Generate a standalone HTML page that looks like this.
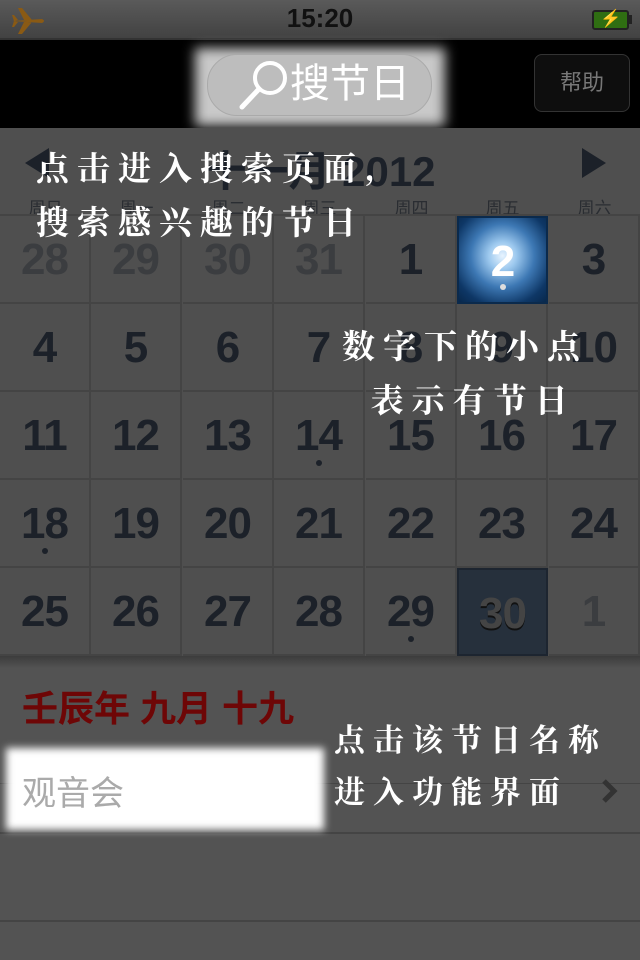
<!DOCTYPE html>
<html><head><meta charset="utf-8"><style>
*{margin:0;padding:0;box-sizing:border-box}
body{width:640px;height:960px;overflow:hidden;background:#535353;font-family:"Liberation Sans","Noto Sans CJK SC",sans-serif;position:relative}
.abs{position:absolute}
#status{left:0;top:0;width:640px;height:40px;background:linear-gradient(#5a5a5a,#424242);border-bottom:2px solid #333}
#nav{left:0;top:40px;width:640px;height:88px;background:#000}
#cal{left:0;top:128px;width:640px;height:530px;background:#4f4f4f}
.cell{position:absolute;width:91px;height:88px;border-right:2px solid #444;border-bottom:2px solid #444;text-align:center;font-weight:bold;font-size:44px;color:#1c2129;line-height:88px;letter-spacing:-1px}
.cell.o{color:#3b3d40}
.dot{position:absolute;left:50%;bottom:12px;width:6px;height:6px;margin-left:-3px;border-radius:3px;background:#1c2129}
.wd{position:absolute;top:194px;width:91px;text-align:center;font-size:17px;color:#2a2d32}
.note{color:#fff;font-family:"Noto Serif CJK SC","WenQuanYi Zen Hei",serif;font-size:33px;letter-spacing:8px;line-height:54px;font-weight:bold}
</style></head><body>
<div id="status" class="abs"></div>
<svg class="abs" style="left:10px;top:6px" width="36" height="30" viewBox="0 0 36 30"><path d="M2 15 L32 13 Q36 15 32 17 L2 15Z M14 14 L8 2 L12 2 L22 14Z M14 16 L8 28 L12 28 L22 16Z M4 15 L2 9 L4 9 L8 14Z M4 15 L2 21 L4 21 L8 16Z" fill="#8a5a14"/></svg>
<div class="abs" style="left:0;width:640px;top:3px;text-align:center;font-weight:bold;font-size:26px;color:#111">15:20</div>
<div class="abs" style="left:592px;top:10px;width:37px;height:20px;border:2px solid #222;border-radius:3px;background:#2f6e12"></div>
<div class="abs" style="left:629px;top:15px;width:3px;height:9px;background:#222"></div>
<div class="abs" style="left:600px;top:9px;color:#111;font-size:17px">⚡</div>
<div id="nav" class="abs"></div>
<div class="abs" style="left:195px;top:48px;width:250px;height:78px;background:#c9c9c9;filter:blur(6px)"></div>
<div class="abs" style="left:207px;top:54px;width:225px;height:62px;border-radius:30px;background:#bdbdbd;border:1px solid #aaa"></div>
<svg class="abs" style="left:236px;top:58px" width="56" height="54" viewBox="0 0 56 54"><circle cx="34" cy="20" r="15" fill="none" stroke="#fff" stroke-width="4"/><line x1="23" y1="31" x2="6" y2="49" stroke="#fff" stroke-width="5" stroke-linecap="round"/></svg>
<div class="abs" style="left:290px;top:58px;font-size:40px;color:#fff;line-height:52px">搜节日</div>
<div class="abs" style="left:534px;top:54px;width:96px;height:58px;border-radius:8px;background:#0e0e0e;border:1px solid #333;color:#777;font-size:22px;text-align:center;line-height:56px">帮助</div>
<div id="cal" class="abs"></div>
<div class="abs" style="left:25px;top:148px;width:0;height:0;border-top:15px solid transparent;border-bottom:15px solid transparent;border-right:24px solid #1c2129"></div>
<div class="abs" style="left:582px;top:148px;width:0;height:0;border-top:15px solid transparent;border-bottom:15px solid transparent;border-left:24px solid #1c2129"></div>
<div class="abs" style="left:0;width:640px;top:138px;text-align:center;font-size:42px;font-weight:bold;color:#1c2129">十一月 2012</div>
<div class="wd" style="left:0">周日</div><div class="wd" style="left:91px">周一</div><div class="wd" style="left:183px">周二</div><div class="wd" style="left:274px">周三</div><div class="wd" style="left:366px">周四</div><div class="wd" style="left:457px">周五</div><div class="wd" style="left:549px">周六</div>
<div class="abs" style="left:0;top:214px;width:640px;height:2px;background:#444"></div>
<div id="grid"></div>
<script>
var d=[[28,29,30,31,1,2,3],[4,5,6,7,8,9,10],[11,12,13,14,15,16,17],[18,19,20,21,22,23,24],[25,26,27,28,29,30,1]];
var dots={"2-3":1,"3-0":1,"4-4":1,"0-5":1};
var h="";
for(var r=0;r<5;r++)for(var c=0;c<7;c++){
var cls="cell"+((r==0&&c<4)||(r==4&&c==6)?" o":"");
var st="left:"+Math.round(c*91.43)+"px;top:"+(216+r*88)+"px;";
var txt=d[r][c];
if(r==0&&c==5){st+="background:radial-gradient(circle at 50% 45%,#e8f4ff 0,#9cc8ee 22%,#3d78b4 50%,#0e3766 80%,#08284c 100%);color:#fff;border:2px solid #0b2a4c;";}
if(r==4&&c==5){st+="background:#26303c;color:#444;text-shadow:0 2px 0 #111;border:2px solid #1d2530;";}
var dot=dots[r+"-"+c]?'<div class="dot"'+(r==0?' style="background:#ddd"':'')+'></div>':'';
h+='<div class="'+cls+'" style="'+st+'">'+txt+dot+'</div>';}
document.getElementById("grid").innerHTML=h;
</script>
<div class="abs" style="left:0;top:656px;width:640px;height:12px;background:linear-gradient(#3c3c3c,#535353)"></div>
<div class="abs" style="left:22px;top:680px;font-size:36px;color:#6e0606;font-weight:bold">壬辰年 九月 十九</div>
<div class="abs" style="left:0;top:783px;width:640px;height:1px;background:#444"></div>
<div class="abs" style="left:0;top:832px;width:640px;height:2px;background:#444"></div>
<div class="abs" style="left:0;top:920px;width:640px;height:2px;background:#444"></div>
<div class="abs" style="left:6px;top:748px;width:318px;height:82px;background:#fff;filter:blur(4px)"></div>
<div class="abs" style="left:22px;top:766px;font-size:34px;color:#aaa">观音会</div>
<svg class="abs" style="left:600px;top:778px" width="18" height="26" viewBox="0 0 18 26"><path d="M4 3 L14 13 L4 23" fill="none" stroke="#333" stroke-width="5"/></svg>
<div class="abs note" style="left:36px;top:140px">点击进入搜索页面,<br>搜索感兴趣的节日</div>
<div class="abs note" style="left:342px;top:318px;text-align:center">数字下的小点<br>&nbsp;表示有节日</div>
<div class="abs note" style="left:334px;top:712px;font-size:31px;line-height:52px">点击该节日名称<br>进入功能界面</div>
</body></html>
